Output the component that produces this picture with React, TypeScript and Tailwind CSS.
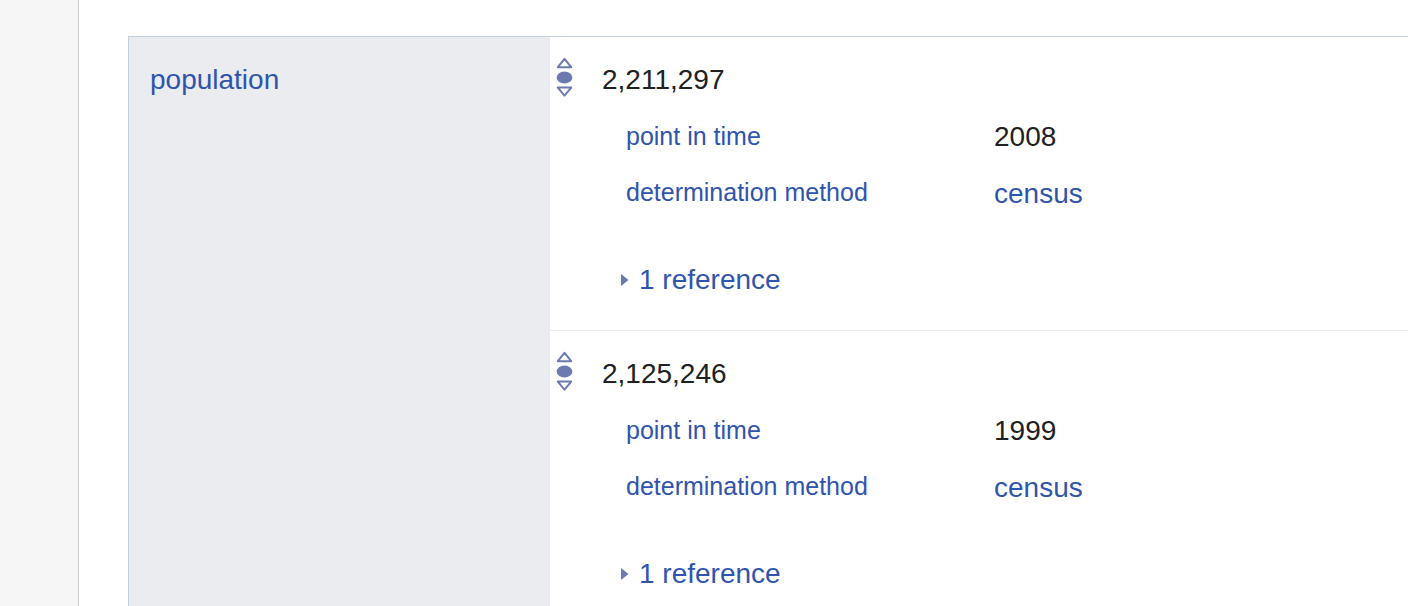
import React from 'react';

const RankIcon = () => (
  <svg width="17" height="40" viewBox="0 0 17 40" className="shrink-0 text-[#6b7ab0]">
    <path d="M8.5 1.8 L15.2 10.2 L1.8 10.2 Z" fill="none" stroke="currentColor" strokeWidth="2" strokeLinejoin="round" />
    <ellipse cx="8.5" cy="20.5" rx="7.8" ry="6" fill="currentColor" />
    <path d="M1.8 30.6 L15.2 30.6 L8.5 38.6 Z" fill="none" stroke="currentColor" strokeWidth="2" strokeLinejoin="round" />
  </svg>
);

const Caret = () => (
  <svg width="9" height="16" viewBox="0 0 9 16" className="shrink-0 text-[#6b7ab0]">
    <path d="M1 2 L8.5 8 L1 14 Z" fill="currentColor" />
  </svg>
);

type Statement = { value: string; year: string };

const statements: Statement[] = [
  { value: '2,211,297', year: '2008' },
  { value: '2,125,246', year: '1999' },
];

const StatementBlock = ({ s, last }: { s: Statement; last: boolean }) => (
  <div className={last ? 'pt-[20px] pb-[34px]' : 'pt-[20px] pb-[34px] border-b border-[#eaecf0]'}>
    <div className="flex items-start pl-[6px]">
      <RankIcon />
      <span className="ml-[29px] mt-[7px] text-[28px] leading-[32px] text-[#202122]">{s.value}</span>
    </div>
    <div className="mt-[19px] pl-[76px] flex flex-col gap-[16px]">
      <div className="flex items-start h-[40px]">
        <span className="w-[368px] text-[25px] leading-[40px] text-[#2f54ad]">point in time</span>
        <span className="pt-[1px] text-[28px] leading-[40px] text-[#202122]">{s.year}</span>
      </div>
      <div className="flex items-start h-[40px]">
        <span className="w-[368px] text-[25px] leading-[40px] text-[#2f54ad]">determination method</span>
        <span className="pt-[2px] text-[28px] leading-[40px] text-[#2f54ad]">census</span>
      </div>
    </div>
    <div className="mt-[52px] pl-[70px] flex items-center h-[32px] gap-[10px]">
      <Caret />
      <span className="text-[28px] leading-[32px] text-[#2f54ad]">1 reference</span>
    </div>
  </div>
);

export default function App() {
  return (
    <div
      className="flex w-[1408px] h-[606px] overflow-hidden bg-white"
      style={{ fontFamily: '"Liberation Sans", Arial, sans-serif' }}
    >
      <div className="w-[79px] shrink-0 bg-[#f6f6f6] border-r border-[#c8ccd1]" />
      <div className="flex-1 pl-[49px] pt-[36px]">
        <div className="flex border-l border-t border-[#c5cfe2] min-h-[600px]">
          <div className="w-[421px] shrink-0 bg-[#eaecf0] pl-[21px] pt-[27px]">
            <span className="text-[28px] leading-[32px] text-[#2f54ad]">population</span>
          </div>
          <div className="flex-1 flex flex-col">
            {statements.map((s, i) => (
              <StatementBlock key={s.value} s={s} last={i === statements.length - 1} />
            ))}
          </div>
        </div>
      </div>
    </div>
  );
}
